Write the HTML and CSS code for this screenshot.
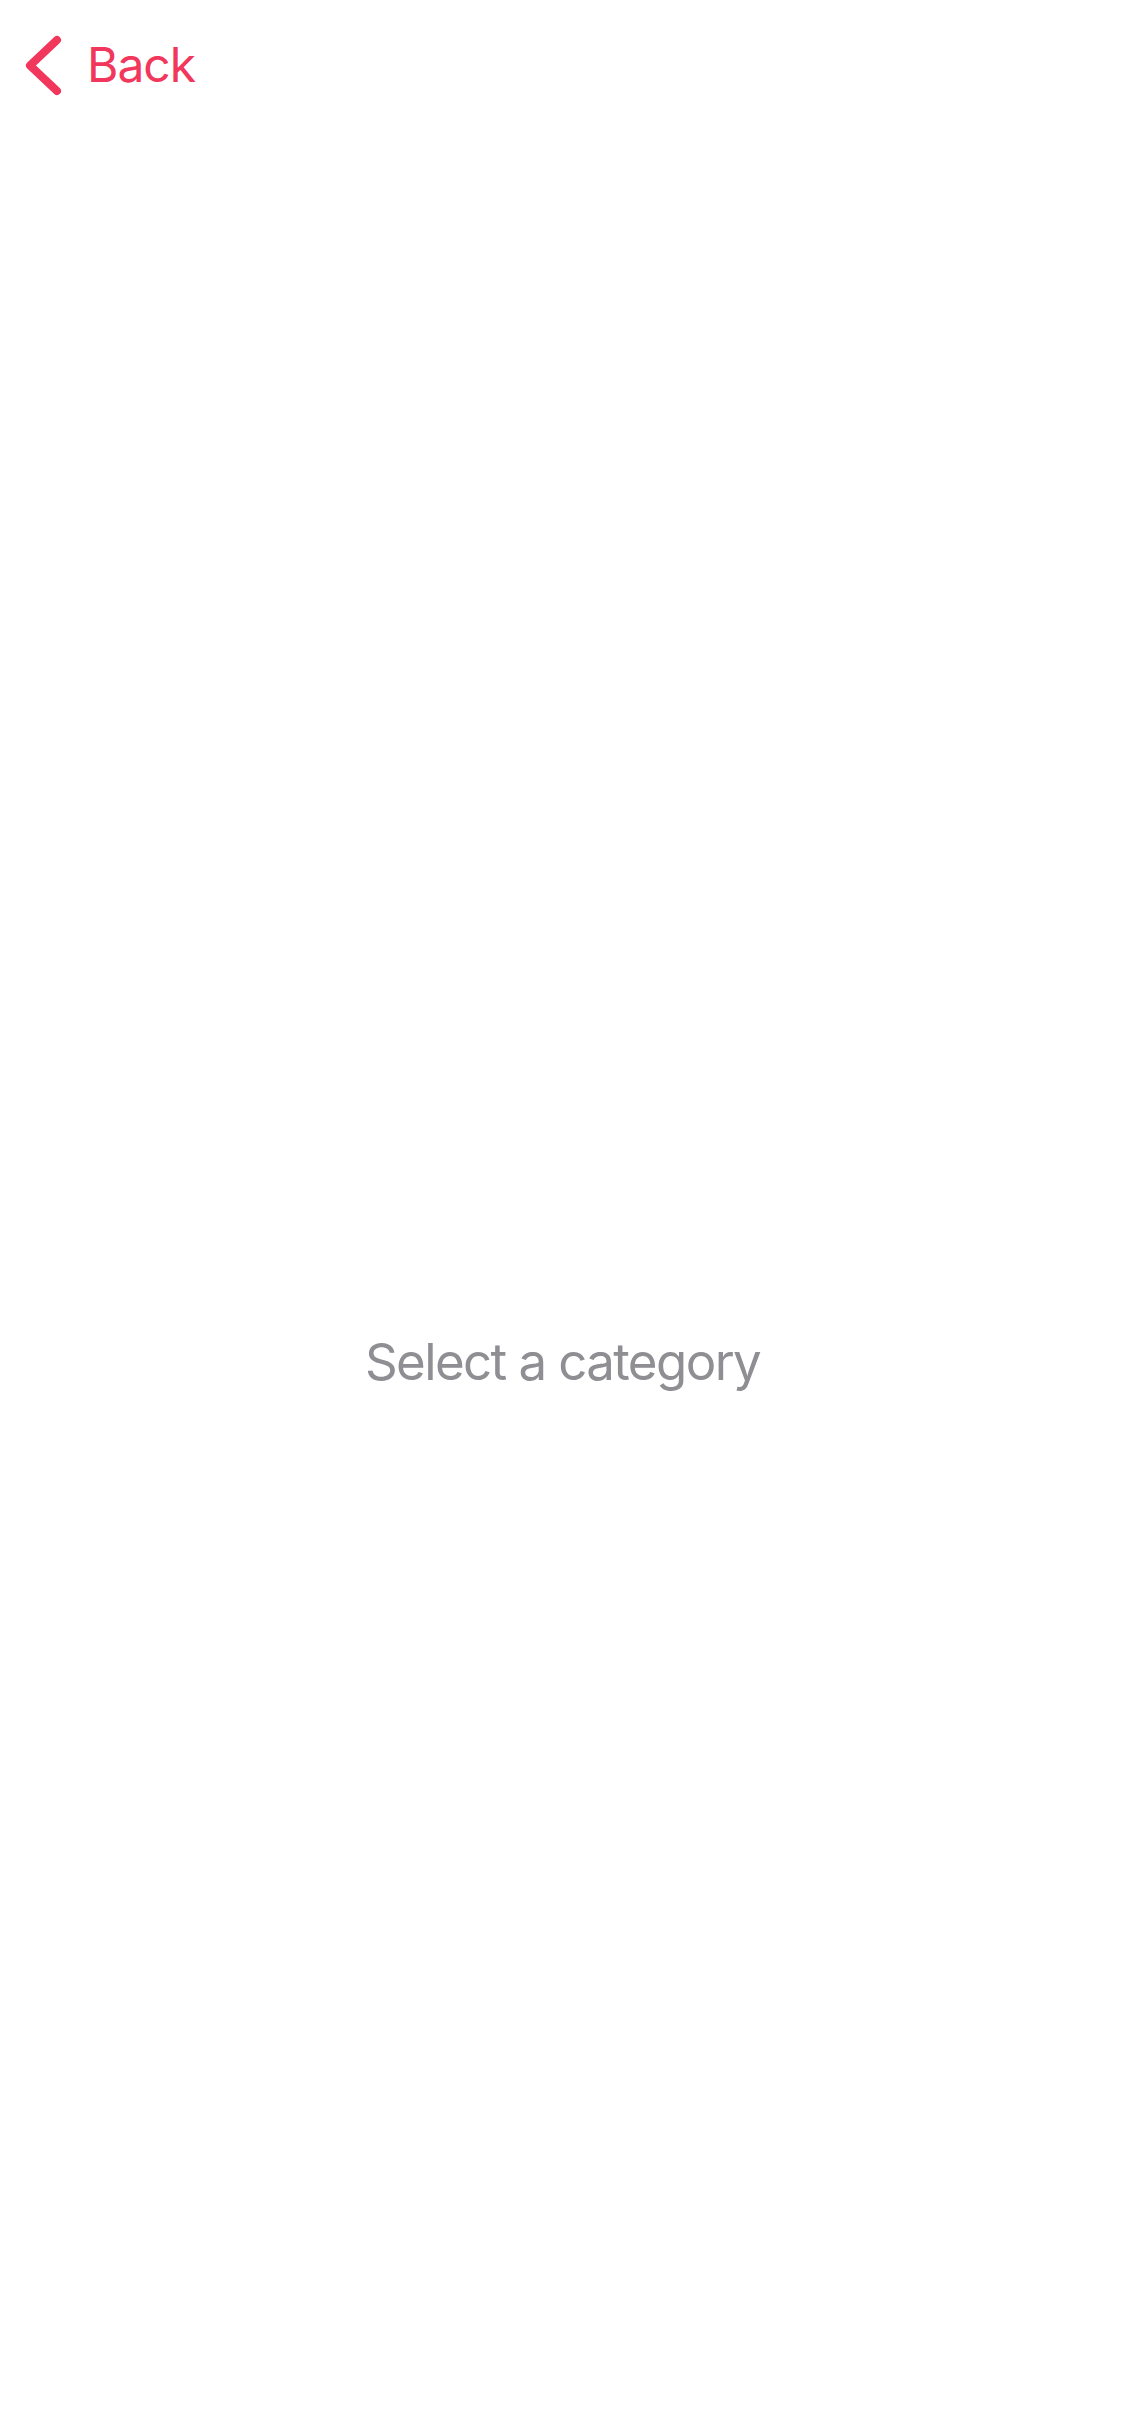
FILE: index.html
```html
<!DOCTYPE html>
<html lang="en">
<head>
<meta charset="utf-8">
<title>Select a category</title>
<link rel="stylesheet" href="styles.css">
</head>
<body>
<header class="nav">
  <a class="back" href="#">
    <svg class="back-icon" width="40" height="62" viewBox="0 0 40 62" aria-hidden="true">
      <path d="M34 6 L7 31.5 L34 57" fill="none" stroke="#F2375C" stroke-width="8" stroke-linecap="round" stroke-linejoin="round"/>
    </svg>
    <span class="back-label">Back</span>
  </a>
</header>
<main class="content">
  <p class="placeholder">Select a category</p>
</main>
</body>
</html>
```
FILE: styles.css
```css
html, body {
  margin: 0;
  padding: 0;
  background: #ffffff;
}
body {
  width: 1125px;
  min-height: 2436px;
  font-family: Inter, "Open Sans", "Liberation Sans", sans-serif;
}
.nav {
  display: flex;
  align-items: flex-start;
  padding: 34px 0 0 23px;
  height: 62px;
}
.back {
  display: flex;
  align-items: flex-start;
  gap: 24px;
  text-decoration: none;
  color: #F2375C;
}
.back-icon {
  display: block;
}
.back-label {
  font-size: 48px;
  line-height: 62px;
  font-weight: 400;
  letter-spacing: -1px;
}
.content {
  padding-top: 1234px;
}
.placeholder {
  margin: 0;
  text-align: center;
  font-size: 51px;
  line-height: 64px;
  letter-spacing: -1.6px;
  color: #8E8E93;
  font-weight: 400;
}
```
